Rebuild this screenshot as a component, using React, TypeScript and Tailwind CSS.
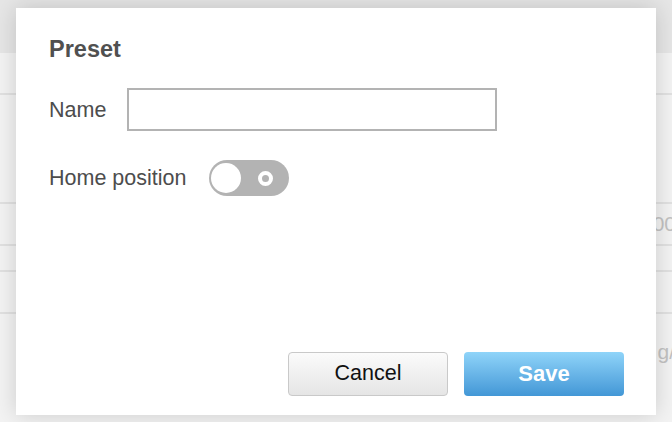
import React from 'react';

const PresetDialog: React.FC = () => {
  return (
    <div className="absolute left-[16px] top-[8px] flex h-[407px] w-[640px] flex-col bg-white pl-[33px] pr-[32px] pt-[29px] pb-[19px] shadow-[0_0_22px_rgba(0,0,0,0.16)]">
      {/* title */}
      <h2 className="text-[23.5px] font-bold leading-[24px] text-[#505050]">Preset</h2>

      {/* name */}
      <div className="mt-[27px] flex items-center gap-[21px]">
        <label className="text-[21.5px] leading-[24px] text-[#4d4d4d]">Name</label>
        <input className="h-[43px] w-[370px] border-2 border-[#b3b3b3] bg-white px-2 text-[18px] outline-none" />
      </div>

      {/* home position */}
      <div className="mt-[29px] flex items-center gap-[23px]">
        <span className="text-[21.5px] leading-[24px] text-[#4d4d4d]">Home position</span>
        <button className="flex h-[36px] w-[80px] items-center justify-between rounded-full bg-[#b3b3b3] pl-[2px] pr-[16px]">
          <span className="h-[30px] w-[30px] rounded-full bg-white" />
          <span className="h-[15px] w-[15px] rounded-full border-[4px] border-white bg-[#b3b3b3]" />
        </button>
      </div>

      {/* actions */}
      <div className="mt-auto flex justify-end gap-[16px]">
        <button className="h-[44px] w-[160px] rounded-[4px] border border-[#c9c9c9] bg-gradient-to-b from-[#fbfbfb] to-[#e5e5e5] pb-[2px] text-[21.5px] text-[#111]">
          Cancel
        </button>
        <button className="h-[44px] w-[160px] rounded-[4px] bg-gradient-to-b from-[#8fd4f9] to-[#4297d6] pb-[2px] text-[22px] font-bold text-white">
          Save
        </button>
      </div>
    </div>
  );
};

const App: React.FC = () => {
  return (
    <div className="relative h-[422px] w-[672px] overflow-hidden bg-[#f3f3f3] font-['Liberation_Sans',Arial,sans-serif]">
      {/* page behind the dialog */}
      <div className="flex flex-col">
        <div className="h-[53px] bg-[#e6e6e6]" />
        <div className="h-[42px] border-b-2 border-[#e1e1e1]" />
        <div className="h-[109px] border-b-2 border-[#e1e1e1]" />
        <div className="flex h-[42px] items-center justify-end border-b-2 border-[#e1e1e1]">
          <span className="-mr-[4px] text-[21px] text-[#c2c2c2]">00</span>
        </div>
        <div className="h-[26px] border-b-2 border-[#e1e1e1]" />
        <div className="h-[42px] border-b-2 border-[#e1e1e1]" />
        <div className="flex h-[76px] items-center justify-end">
          <span className="-mr-[3px] text-[21px] text-[#c2c2c2]">g/</span>
        </div>
      </div>

      <PresetDialog />
    </div>
  );
};

export default App;
